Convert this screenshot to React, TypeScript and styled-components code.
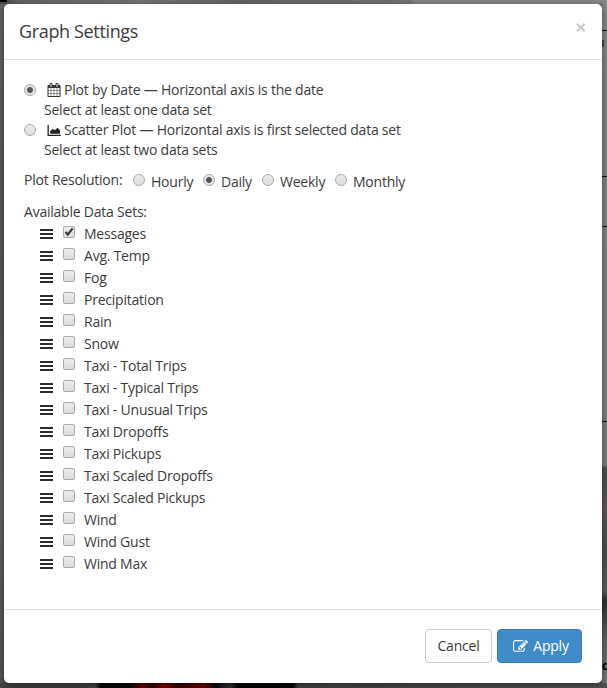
import React, { useState } from "react";
import styled, { createGlobalStyle, css } from "styled-components";

const GlobalStyle = createGlobalStyle`
  * { box-sizing: border-box; }
  body { margin: 0; overflow: hidden; }
`;

const Backdrop = styled.div`
  position: relative;
  width: 607px;
  height: 688px;
  padding: 4px 5px 5px 4px;
  overflow: hidden;
  font: 14px/20px "Open Sans", "Noto Sans", sans-serif;
  color: #3c3c3c;
  background:
    linear-gradient(#111, #111) 602px 30px / 5px 1px no-repeat,
    linear-gradient(#444, #444) 602px 40px / 2px 7px no-repeat,
    linear-gradient(#111, #111) 602px 176px / 5px 1px no-repeat,
    linear-gradient(#111, #111) 602px 226px / 5px 1px no-repeat,
    linear-gradient(#111, #111) 602px 421px / 5px 1px no-repeat,
    linear-gradient(#000, #000) 0 0 / 7px 2px no-repeat,
    linear-gradient(90deg, #444 0, #444 95px, #080808 101px, #080808 130px, #700000 142px, #300 153px, #800000 164px, #300 180px, #700000 204px, #080808 216px, #333 230px, #050505 238px, #080808 293px, #444 298px, #555 607px) 0 683px / 607px 5px no-repeat,
    linear-gradient(90deg, #444 0, #666 18px, #777 140px, #666 240px, #777 410px, #888 416px, #888) 0 0 / 607px 4px no-repeat,
    linear-gradient(#888 0, #808080 465px, #505050 468px, #645a5a 510px, #505050 550px, #606060 590px, #303030 600px, #666 640px, #777 680px) 602px 0 / 5px 688px no-repeat,
    linear-gradient(#666, #585858 300px, #666 500px, #555);
`;

const MapLabel = styled.span`
  position: absolute;
  left: 602px;
  top: 656px;
  font: bold 13px/20px "Liberation Sans", sans-serif;
  color: #000;
`;

const Dialog = styled.form`
  position: relative;
  display: flex;
  flex-direction: column;
  height: 679px;
  background: #fff;
  border-radius: 5px;
  box-shadow: 0 2px 8px rgba(0, 0, 0, 0.5);
`;

const Header = styled.header`
  display: flex;
  justify-content: space-between;
  height: 56px;
  padding: 15px 15px 0;
  border-bottom: 1px solid #e2e2e2;
`;

const Title = styled.h4`
  margin: 0;
  font-size: 18px;
  line-height: 25px;
  font-weight: 400;
  letter-spacing: -0.35px;
`;

const Close = styled.button`
  width: 12px;
  height: 18px;
  padding: 0;
  border: 0;
  background: none;
  color: #c9c9c9;
  svg { display: block; }
`;

const Body = styled.main`
  flex: 1;
  padding: 20px;
`;

const Mode = styled.label`
  display: grid;
  grid-template-columns: 20px 1fr;
  height: 40px;
`;

const ModeTitle = styled.span`
  display: flex;
  align-items: center;
  height: 20px;
  padding-left: 3px;
  gap: 3px;
`;

const Phrase = styled.span`
  white-space: nowrap;
  letter-spacing: -0.225px;
`;

const control = css`
  appearance: none;
  flex: none;
  margin: 0;
  border: 1px solid #a9a9a9;
  background: linear-gradient(#ededed, #dcdcdc);
`;

const Radio = styled.input.attrs({ type: "radio" })`
  ${control}
  width: 12px;
  height: 12px;
  border-radius: 50%;
  &:checked {
    background: radial-gradient(circle, #555 0 2.5px, #e5e5e5 3.5px);
  }
`;

const ModeRadio = styled(Radio)`
  margin-top: 4px;
`;

const Resolution = styled.div`
  display: flex;
  height: 20px;
  margin-top: 10px;
`;

const ResolutionLabel = styled.span`
  width: 109px;
`;

const Choice = styled.label<{ $width: number }>`
  display: flex;
  gap: 6px;
  width: ${(p) => p.$width}px;
  padding-top: 2px;
`;

const ChoiceRadio = styled(Radio)`
  margin-top: 2px;
`;

const SetHeading = styled.div`
  height: 20px;
  margin-top: 12px;
`;

const List = styled.ul`
  list-style: none;
  margin: 0;
  padding: 1px 0 0 16px;
`;

const Item = styled.li`
  display: flex;
  align-items: center;
  height: 22px;
`;

const Handle = styled.svg`
  flex: none;
  width: 13px;
  height: 10px;
  margin-right: 10px;
`;

const ItemLabel = styled.label`
  display: flex;
  align-items: center;
  gap: 9px;
`;

const CheckWrap = styled.span`
  display: grid;
  width: 12px;
  height: 12px;
  margin-bottom: 4px;
  > * { grid-area: 1 / 1; }
  svg { z-index: 1; pointer-events: none; }
`;

const Checkbox = styled.input.attrs({ type: "checkbox" })`
  ${control}
  width: 12px;
  height: 12px;
  border-radius: 2px;
`;

const Footer = styled.footer`
  display: flex;
  justify-content: flex-end;
  gap: 5px;
  height: 74px;
  padding: 19px 20px;
  border-top: 1px solid #e0e3e3;
`;

const Button = styled.button<{ $primary?: boolean }>`
  display: flex;
  align-items: center;
  justify-content: center;
  gap: 5px;
  width: ${(p) => (p.$primary ? 85 : 67)}px;
  height: 34px;
  padding: ${(p) => (p.$primary ? "0 0 0 3px" : "0")};
  border: 1px solid ${(p) => (p.$primary ? "#357ebd" : "#ccc")};
  border-radius: 4px;
  background: ${(p) => (p.$primary ? "#428bca" : "#fff")};
  color: ${(p) => (p.$primary ? "#fff" : "#3c3c3c")};
  font: inherit;
`;

const CalendarIcon = () => (
  <svg width="14" height="14" viewBox="0 0 1792 1792" fill="#333">
    <path d="M192 1664h288v-288h-288v288zm352 0h320v-288h-320v288zm-352-352h288v-320h-288v320zm352 0h320v-320h-320v320zm-352-384h288v-288h-288v288zm736 736h320v-288h-320v288zm-384-736h320v-288h-320v288zm768 736h288v-288h-288v288zm-384-352h320v-320h-320v320zm-352-864v-288q0-13-9.5-22.5t-22.5-9.5h-64q-13 0-22.5 9.5t-9.5 22.5v288q0 13 9.5 22.5t22.5 9.5h64q13 0 22.5-9.5t9.5-22.5zm736 864h288v-320h-288v320zm-384-384h320v-288h-320v288zm384 0h288v-288h-288v288zm32-480v-288q0-13-9.5-22.5t-22.5-9.5h-64q-13 0-22.5 9.5t-9.5 22.5v288q0 13 9.5 22.5t22.5 9.5h64q13 0 22.5-9.5t9.5-22.5zm384-64v1280q0 52-38 90t-90 38h-1408q-52 0-90-38t-38-90v-1280q0-52 38-90t90-38h128v-96q0-66 47-113t113-47h64q66 0 113 47t47 113v96h384v-96q0-66 47-113t113-47h64q66 0 113 47t47 113v96h128q52 0 90 38t38 90z" />
  </svg>
);

const AreaIcon = () => (
  <svg width="14" height="14" viewBox="0 0 14 14" fill="#222">
    <path d="M.5 2h1.3v9.7h12V13H.5zM3.2 10.8V8.2l2.7-2.5 2 1.5 2.6-2.5 2.6 2.8v3.3z" />
  </svg>
);

const EditIcon = () => (
  <svg width="15" height="15" viewBox="0 0 1792 1792" fill="currentColor">
    <path d="M888 1184l116-116-152-152-116 116v56h96v96h56zm440-720q-16-16-33 1l-350 350q-17 17-1 33t33-1l350-350q17-17 1-33zm80 594v190q0 119-84.5 203.5t-203.5 84.5h-832q-119 0-203.5-84.5t-84.5-203.5v-832q0-119 84.5-203.5t203.5-84.5h832q63 0 117 25 15 7 18 23 3 17-9 29l-49 49q-14 14-32 8-23-6-45-6h-832q-66 0-113 47t-47 113v832q0 66 47 113t113 47h832q66 0 113-47t47-113v-126q0-13 9-22l64-64q15-15 35-7t20 29zm-96-738l288 288-672 672h-288v-288zm444 132l-92 92-288-288 92-92q28-28 68-28t68 28l152 152q28 28 28 68t-28 68z" />
  </svg>
);

const resolutions = [
  { name: "Hourly", width: 70 },
  { name: "Daily", width: 59 },
  { name: "Weekly", width: 73 },
  { name: "Monthly", width: 80 },
];

const dataSets = [
  "Messages", "Avg. Temp", "Fog", "Precipitation", "Rain", "Snow",
  "Taxi - Total Trips", "Taxi - Typical Trips", "Taxi - Unusual Trips",
  "Taxi Dropoffs", "Taxi Pickups", "Taxi Scaled Dropoffs",
  "Taxi Scaled Pickups", "Wind", "Wind Gust", "Wind Max",
];

export default function App() {
  const [selected, setSelected] = useState<string[]>(["Messages"]);
  const toggle = (name: string) =>
    setSelected((s) => (s.includes(name) ? s.filter((n) => n !== name) : [...s, name]));

  return (
    <>
      <GlobalStyle />
      <Backdrop>
        <MapLabel>d</MapLabel>
        <Dialog onSubmit={(e) => e.preventDefault()}>
          <Header>
            <Title>Graph Settings</Title>
            <Close type="button" aria-label="Close">
              <svg width="12" height="18" viewBox="0 0 12 18" stroke="currentColor" strokeWidth="2">
                <path d="M2 4.7l7.6 7.6M9.6 4.7L2 12.3" />
              </svg>
            </Close>
          </Header>
          <Body>
            <Mode>
              <ModeRadio name="mode" defaultChecked />
              <div>
                <ModeTitle><CalendarIcon /><Phrase>Plot by Date — Horizontal axis is the date</Phrase></ModeTitle>
                <Phrase>Select at least one data set</Phrase>
              </div>
            </Mode>
            <Mode>
              <ModeRadio name="mode" />
              <div>
                <ModeTitle><AreaIcon /><Phrase>Scatter Plot — Horizontal axis is first selected data set</Phrase></ModeTitle>
                <Phrase>Select at least two data sets</Phrase>
              </div>
            </Mode>
            <Resolution>
              <ResolutionLabel><Phrase>Plot Resolution:</Phrase></ResolutionLabel>
              {resolutions.map((r) => (
                <Choice key={r.name} $width={r.width}>
                  <ChoiceRadio name="resolution" defaultChecked={r.name === "Daily"} />
                  <Phrase>{r.name}</Phrase>
                </Choice>
              ))}
            </Resolution>
            <SetHeading><Phrase>Available Data Sets:</Phrase></SetHeading>
            <List>
              {dataSets.map((name) => (
                <Item key={name}>
                  <Handle viewBox="0 0 13 10" fill="#2b2b2b">
                    <path d="M0 0h13v2H0zM0 4h13v2H0zM0 8h13v2H0z" />
                  </Handle>
                  <ItemLabel>
                    <CheckWrap>
                      <Checkbox checked={selected.includes(name)} onChange={() => toggle(name)} />
                      {selected.includes(name) && (
                        <svg width="12" height="12" viewBox="0 0 12 12" fill="none" stroke="#333" strokeWidth="2.2">
                          <path d="M2.6 6l2.2 2.6L9.6 2.4" />
                        </svg>
                      )}
                    </CheckWrap>
                    <Phrase>{name}</Phrase>
                  </ItemLabel>
                </Item>
              ))}
            </List>
          </Body>
          <Footer>
            <Button type="button"><Phrase>Cancel</Phrase></Button>
            <Button type="submit" $primary><EditIcon /><Phrase>Apply</Phrase></Button>
          </Footer>
        </Dialog>
      </Backdrop>
    </>
  );
}
